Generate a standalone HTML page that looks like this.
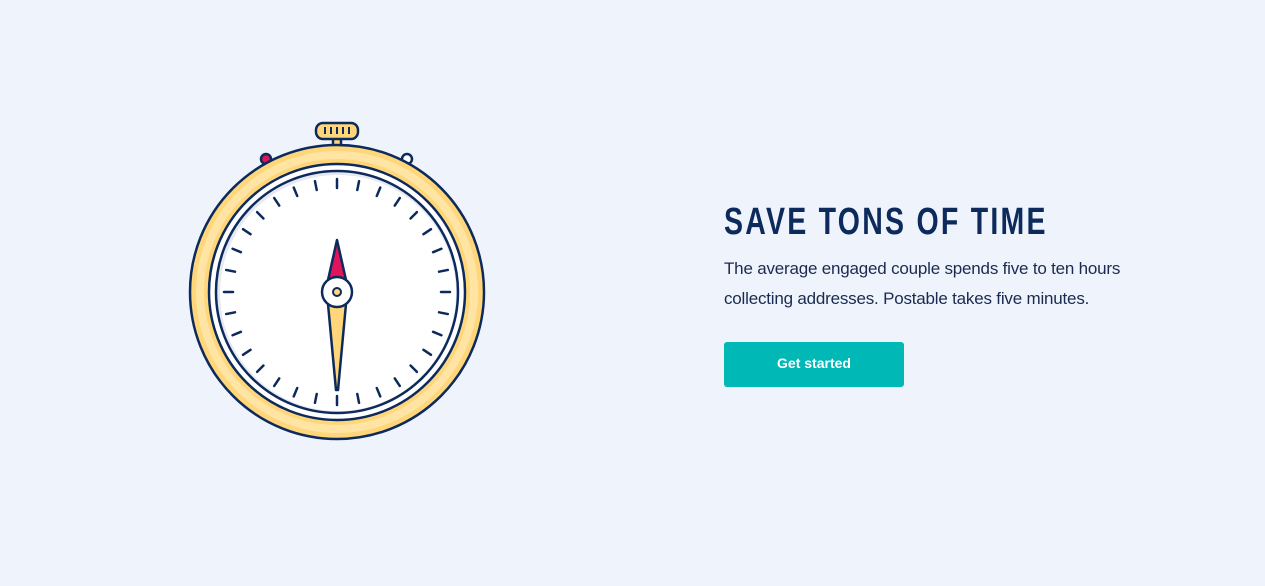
<!DOCTYPE html>
<html><head><meta charset="utf-8"><style>
html,body{margin:0;padding:0;width:1265px;height:586px;background:#eff4fc;overflow:hidden;font-family:"Liberation Sans",sans-serif}
svg{position:absolute;left:0;top:0}
h1{position:absolute;left:724px;top:201px;margin:0;font-family:"Liberation Sans",sans-serif;font-weight:bold;font-size:38px;letter-spacing:3px;color:#0d2a5c;white-space:nowrap;transform:scaleX(0.75);transform-origin:0 0}
p{position:absolute;left:724px;top:254px;margin:0;font-size:17px;line-height:30px;color:#1a2a50;white-space:nowrap;letter-spacing:-0.2px}
.btn{position:absolute;left:724px;top:342px;width:180px;height:45px;background:#00b8b5;border-radius:3px;color:#fff;font-weight:bold;font-size:14px;text-align:center;line-height:43px}
</style></head><body>
<svg width="1265" height="586">
<g stroke="#0d2a5c" stroke-width="2.5">
<rect x="333" y="137" width="8" height="9" fill="#ffd77a"/>
<rect x="316" y="123" width="42" height="16" rx="7" fill="#ffd77a"/>
<g stroke-width="2"><line x1="325" y1="127" x2="325" y2="134"/><line x1="331" y1="127" x2="331" y2="134"/><line x1="337" y1="127" x2="337" y2="134"/><line x1="343" y1="127" x2="343" y2="134"/><line x1="349" y1="127" x2="349" y2="134"/></g>
<circle cx="266" cy="159" r="5" fill="#e0145a"/>
<circle cx="407" cy="159" r="5" fill="#fff"/>
<circle cx="337" cy="292" r="147" fill="#ffd77a"/>
</g>
<circle cx="337" cy="292" r="137" fill="none" stroke="#ffe4a3" stroke-width="8"/>
<circle cx="337" cy="292" r="128" fill="#fff" stroke="#0d2a5c" stroke-width="2.5"/>
<circle cx="337" cy="292" r="121" fill="#e6e9f2" stroke="#0d2a5c" stroke-width="2.5"/>
<circle cx="338" cy="293" r="118" fill="#fff"/>
<g stroke="#0d2a5c" stroke-width="2.5" stroke-linecap="round" id="t"></g>
<path d="M337 240 L346 280 L328 280 Z" fill="#e0145a" stroke="#0d2a5c" stroke-width="2.5" stroke-linejoin="round"/>
<path d="M328 304 L346 304 L338 390 L336 390 Z" fill="#ffd77a" stroke="#0d2a5c" stroke-width="2.5" stroke-linejoin="round"/>
<circle cx="337" cy="292" r="15" fill="#fff" stroke="#0d2a5c" stroke-width="2.5"/>
<circle cx="337" cy="292" r="4" fill="#ffd77a" stroke="#0d2a5c" stroke-width="2"/>
</svg>
<script>
var g=document.getElementById('t'),s='';
for(var i=0;i<32;i++){var a=i*11.25*Math.PI/180,c=Math.cos(a),n=Math.sin(a);
s+='<line x1="'+(337+n*104)+'" y1="'+(292-c*104)+'" x2="'+(337+n*113)+'" y2="'+(292-c*113)+'"/>';}
g.innerHTML=s;
</script>
<h1>SAVE TONS OF TIME</h1>
<p>The average engaged couple spends five to ten hours<br>collecting addresses. Postable takes five minutes.</p>
<div class="btn">Get started</div>
</body></html>
